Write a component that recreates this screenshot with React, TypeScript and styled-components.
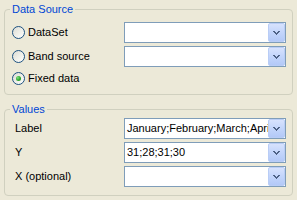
import React from "react";
import styled, { createGlobalStyle } from "styled-components";

const Global = createGlobalStyle`
  html, body { margin: 0; padding: 0; background: #ece9d8; }
  body { width: 297px; height: 200px; overflow: hidden; font-family: "Liberation Sans", Arial, sans-serif; font-size: 11px; color: #000; }
`;

const Page = styled.div`
  padding: 3px 4px 0 4px;
  display: flex;
  flex-direction: column;
`;

const Group = styled.fieldset<{ $top?: number; $pt: number; $pb: number }>`
  margin: ${(p) => p.$top ?? 0}px 0 0 0;
  padding: ${(p) => p.$pt}px 6px ${(p) => p.$pb}px 7px;
  border: 1px solid #d0d0bf;
  border-radius: 4px;
  min-inline-size: 0;
`;

const Legend = styled.legend`
  color: #0046d5;
  line-height: 13px;
  padding: 0 2px;
  margin-left: -2px;
`;

const Grid = styled.div<{ $rows: string }>`
  display: grid;
  grid-template-columns: 1fr 162px;
  grid-template-rows: ${(p) => p.$rows};
  row-gap: 3px;
  align-items: center;
`;

const RadioLabel = styled.label`
  display: flex;
  align-items: center;
  gap: 3px;
  line-height: 13px;
  white-space: nowrap;
`;

const RadioCircle = styled.span<{ $checked?: boolean }>`
  width: 11px;
  height: 11px;
  border-radius: 50%;
  border: 1px solid #1c5180;
  background: linear-gradient(135deg, #dcdcd4 0%, #f0f0ea 55%, #ffffff 100%);
  display: flex;
  align-items: center;
  justify-content: center;
  flex: none;
  &::after {
    content: "";
    display: ${(p) => (p.$checked ? "block" : "none")};
    width: 5px;
    height: 5px;
    border-radius: 50%;
    background: radial-gradient(circle at 35% 35%, #7fe07f 0%, #2ba82b 55%, #1a8a1a 100%);
  }
`;

const FieldLabel = styled.span`
  padding-left: 3px;
  line-height: 13px;
  white-space: nowrap;
`;

const Combo = styled.div`
  height: 21px;
  box-sizing: border-box;
  border: 1px solid #7f9db9;
  background: #fff;
  display: flex;
  align-items: stretch;
`;

const ComboText = styled.span`
  flex: 1;
  min-width: 0;
  overflow: hidden;
  white-space: nowrap;
  padding-left: 2px;
  line-height: 19px;
`;

const DropButton = styled.span`
  width: 17px;
  flex: none;
  box-sizing: border-box;
  border: 1px solid #b9cdf6;
  border-radius: 2px;
  background: linear-gradient(180deg, #d7e2fd 0%, #c3d5fb 50%, #b3c9f7 100%);
  display: flex;
  align-items: center;
  justify-content: center;
`;

const Chevron = () => (
  <svg width="7" height="4" viewBox="0 0 7 4" shapeRendering="crispEdges">
    <g fill="#4d6185">
      <rect x="0" y="0" width="2" height="1" />
      <rect x="5" y="0" width="2" height="1" />
      <rect x="1" y="1" width="2" height="1" />
      <rect x="4" y="1" width="2" height="1" />
      <rect x="2" y="2" width="3" height="1" />
      <rect x="3" y="3" width="1" height="1" />
    </g>
  </svg>
);

const ComboBox = ({ value }: { value?: string }) => (
  <Combo>
    <ComboText>{value ?? ""}</ComboText>
    <DropButton>
      <Chevron />
    </DropButton>
  </Combo>
);

const Radio = ({ label, checked }: { label: string; checked?: boolean }) => (
  <RadioLabel>
    <RadioCircle $checked={checked} />
    {label}
  </RadioLabel>
);

export default function App() {
  return (
    <Page>
      <Global />
      <Group $pt={6} $pb={7}>
        <Legend>Data Source</Legend>
        <Grid $rows="21px 21px 17px">
          <Radio label="DataSet" />
          <ComboBox />
          <Radio label="Band source" />
          <ComboBox />
          <Radio label="Fixed data" checked />
          <span />
        </Grid>
      </Group>
      <Group $top={8} $pt={2} $pb={8}>
        <Legend>Values</Legend>
        <Grid $rows="21px 21px 21px">
          <FieldLabel>Label</FieldLabel>
          <ComboBox value="January;February;March;April" />
          <FieldLabel>Y</FieldLabel>
          <ComboBox value="31;28;31;30" />
          <FieldLabel>X (optional)</FieldLabel>
          <ComboBox />
        </Grid>
      </Group>
    </Page>
  );
}
